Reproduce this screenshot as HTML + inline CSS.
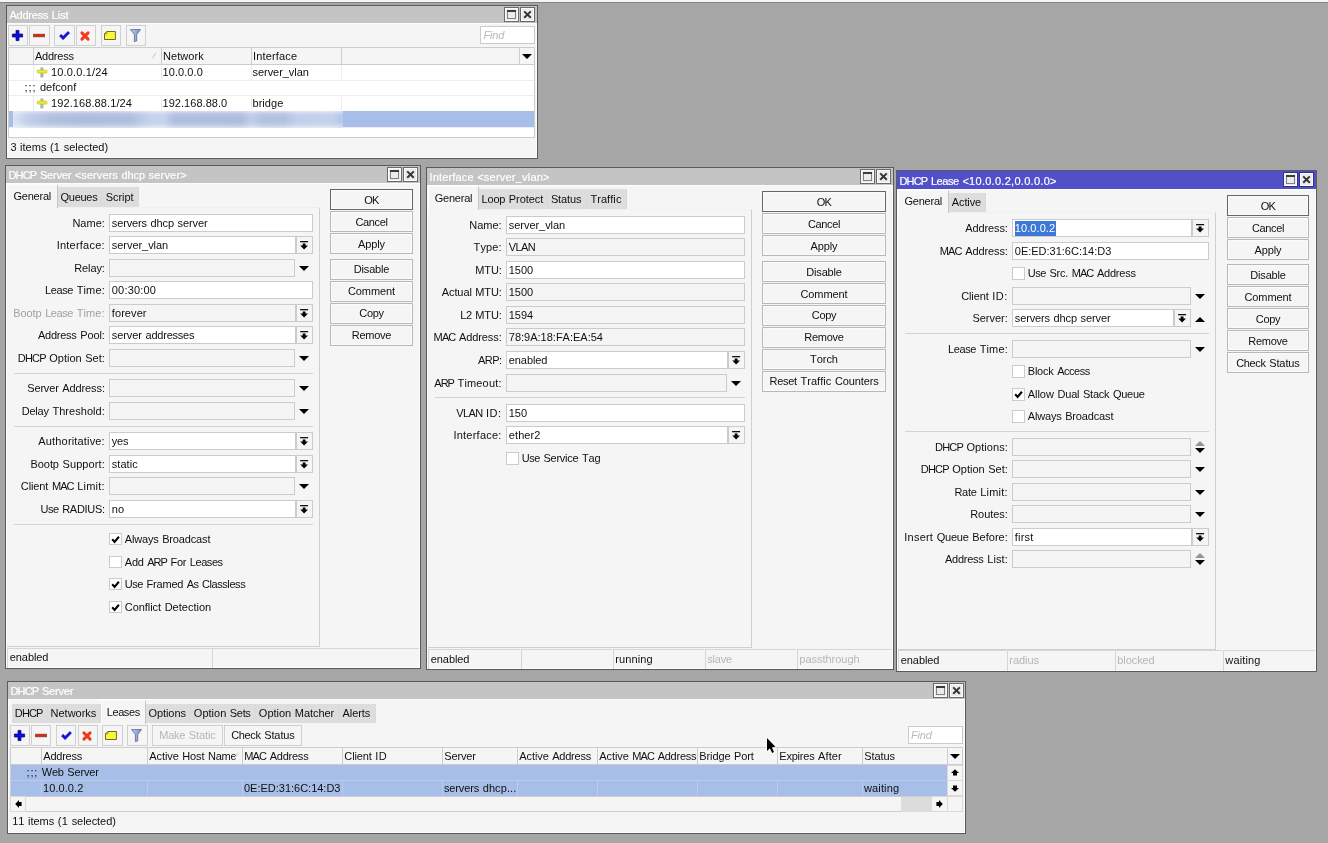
<!DOCTYPE html>
<html><head><meta charset="utf-8"><title>WinBox</title>
<style>
html,body{margin:0;padding:0;}
body{width:1328px;height:843px;overflow:hidden;background:#a6a6a6;font-family:"Liberation Sans",sans-serif;font-size:11.0px;color:#101010;}
#root{position:relative;width:1328px;height:843px;overflow:hidden;will-change:transform;}
#root div,#root svg{position:absolute;box-sizing:border-box;}
svg{overflow:visible;}
.t{white-space:pre;font-size:11.0px;line-height:14px;height:14px;font-kerning:none;-webkit-text-stroke:0px currentColor;}
.win{background:#f5f5f5;border:1px solid #5a5a5a;box-shadow:inset 0 0 0 1px #fdfdfd;}
.tt{color:#fff;-webkit-text-stroke:0.2px #fff;}
.w{color:#fff;}
.lg{color:#a2a2a2;}
.lg2{color:#b6b6b6;}
.find{color:#b9b9b9;font-style:italic;}
.tb{background:#ebebeb;border:1px solid #6a6a6a;box-shadow:inset 0 0 0 1px #fcfcfc;}
.tab-a{background:#f5f5f5;border:1px solid #e2e2e2;border-bottom:none;border-top-color:#fbfbfb;border-left-color:#fbfbfb;border-right-color:#c6c6c6;}
.tab-i{background:#dddddd;box-shadow:inset -1px 0 0 #d9d9d9;}
.panel{border:1px solid #cfcfcf;border-left:none;border-top-color:#f0f0f0;}
.fld{border:1px solid #cbcbcb;}
.cb{border:1px solid #cbcbcb;background:#fff;}
.btn{border:1px solid #b8b8b8;background:#f5f5f5;box-shadow:inset 0 0 0 1px #fbfbfb;}
.btn.def{border-color:#666;}
.tbtn{border:1px solid #d0d0d0;background:#f5f5f5;}
.st{border:1px solid #d6d6d6;border-right:none;border-bottom:none;}
.tbl{border:1px solid #cdcdcd;background:#fff;}
.th{background:#f5f5f5;}
.sb{background:#f5f5f5;border:1px solid #dadada;}
.blur{background:linear-gradient(180deg,rgba(255,255,255,.5) 0,rgba(255,255,255,.12) 3px,rgba(255,255,255,0) 6px,rgba(255,255,255,0) 11px,rgba(255,255,255,.2) 14px,rgba(255,255,255,.55) 17px),linear-gradient(90deg,#dbe4f5 0,#c3d0ea 14px,#b3c1e0 36px,#adbcdc 70px,#b0bfdf 118px,#c4d1ec 136px,#c6d3ed 150px,#b0bfdf 162px,#aebddd 228px,#c0cdea 238px,#b4c3e1 250px,#b2c1e0 270px,#c2cfeb 284px,#c4d1ec 318px,#b5c6ea 330px);filter:blur(.6px);}
</style></head>
<body>
<div id="root">
<div style="left:0px;top:0px;width:1328px;height:2px;background:#f5f5f5;"></div>
<div style="left:0px;top:2px;width:1328px;height:1px;background:#848484;"></div>
<div class="win" style="left:6px;top:5px;width:532px;height:154px;"></div>
<div style="left:7px;top:6px;width:530px;height:17px;background:#c4c4c4;"></div>
<div style="left:7px;top:23px;width:530px;height:1px;background:#fdfdfd;"></div>
<div class="t tt" style="left:9.5px;top:8.3px;"><span style="letter-spacing:-0.24px">Address</span><span style="letter-spacing:0.52px"> </span><span style="letter-spacing:-0.1px">List</span></div>
<div class="tb" style="left:504px;top:7px;width:15px;height:15px;border-color:#6a6a6a;"></div>
<svg style="left:507px;top:10px" width="9" height="9" viewBox="0 0 9 9"><rect x="0.5" y="0.5" width="8" height="8" fill="none" stroke="#828282"/><rect x="0" y="0" width="9" height="2" fill="#3c3c3c"/></svg>
<div class="tb" style="left:520px;top:7px;width:15px;height:15px;border-color:#6a6a6a;"></div>
<svg style="left:523px;top:10px" width="9" height="9" viewBox="0 0 9 9"><path d="M1.2 1.4 L7.8 7.8 M7.8 1.4 L1.2 7.8" stroke="#333" stroke-width="2" fill="none"/></svg>
<div class="tbtn" style="left:8px;top:25px;width:20px;height:21px;"></div>
<svg style="left:12px;top:30px" width="11" height="11" viewBox="0 0 11 11"><path d="M4 0.4 H7 V4 H10.6 V7 H7 V10.6 H4 V7 H0.4 V4 H4 Z" fill="#0d0aec" stroke="#050560" stroke-width="0.7"/></svg>
<div class="tbtn" style="left:29px;top:25px;width:21px;height:21px;"></div>
<svg style="left:33px;top:34px" width="12" height="3" viewBox="0 0 12 3"><rect x="0.3" y="0.1" width="11.4" height="2.8" fill="#e62400" stroke="#6e4a44" stroke-width="0.6"/></svg>
<div class="tbtn" style="left:54px;top:25px;width:21px;height:21px;"></div>
<svg style="left:58.5px;top:31px" width="11" height="9" viewBox="0 0 11 9"><path d="M0.4 5 L2.2 3.3 L4.1 5.3 L8.9 0.4 L10.6 2.1 L4.1 8.8 Z" fill="#1411ea" stroke="#0a0a8c" stroke-width="0.5"/></svg>
<div class="tbtn" style="left:76px;top:25px;width:20px;height:21px;"></div>
<svg style="left:80px;top:31px" width="10" height="10" viewBox="0 0 10 10"><path d="M1.9 1.9 L8.1 8.1 M8.1 1.9 L1.9 8.1" stroke="#f23a1a" stroke-width="3" stroke-linecap="round" fill="none"/></svg>
<div class="tbtn" style="left:101px;top:25px;width:20px;height:21px;"></div>
<svg style="left:104.2px;top:31px" width="12" height="9" viewBox="0 0 12 9"><path d="M2.9 0.5 H11.4 V8.5 H0.5 V2.9 Z" fill="#f8f83a" stroke="#5c5c14" stroke-width="0.9"/><path d="M2.9 0.5 V2.9 H0.5 Z" fill="#fcfca0" stroke="#5c5c14" stroke-width="0.6"/></svg>
<div class="tbtn" style="left:126px;top:25px;width:20px;height:21px;"></div>
<svg style="left:130px;top:29px" width="11" height="13" viewBox="0 0 11 13"><defs><linearGradient id="fg" x1="0" x2="1"><stop offset="0" stop-color="#c8d4f0"/><stop offset="1" stop-color="#7488c4"/></linearGradient></defs><path d="M0.5 0.6 H10.5 L6.7 5.4 V12 L4.4 12.6 V5.4 Z" fill="url(#fg)" stroke="#58648e" stroke-width="0.8"/></svg>
<div class="fld" style="left:480px;top:26px;width:55px;height:18px;background:#fff;"></div>
<div class="t find" style="left:483.5px;top:28px;"><span style="letter-spacing:-0.19px">Find</span></div>
<div class="tbl" style="left:8px;top:47px;width:527px;height:91px;"></div>
<div class="th" style="left:9px;top:48px;width:525px;height:16px;"></div>
<div style="left:9px;top:64px;width:525px;height:1px;background:#cdcdcd;"></div>
<div style="left:33px;top:48px;width:1px;height:16px;background:#cdcdcd;"></div>
<div style="left:161px;top:48px;width:1px;height:16px;background:#cdcdcd;"></div>
<div style="left:251px;top:48px;width:1px;height:16px;background:#cdcdcd;"></div>
<div style="left:341px;top:48px;width:1px;height:16px;background:#cdcdcd;"></div>
<div style="left:519px;top:48px;width:1px;height:16px;background:#cdcdcd;"></div>
<div class="t" style="left:35px;top:49px;"><span style="letter-spacing:-0.24px">Address</span></div>
<div class="t" style="left:163px;top:49px;"><span style="letter-spacing:0.07px">Network</span></div>
<div class="t" style="left:253px;top:49px;"><span style="letter-spacing:0.16px">Interface</span></div>
<svg style="left:151px;top:52px" width="7" height="7" viewBox="0 0 7 7"><path d="M1.2 6.5 L5 0.8" fill="none" stroke="#c4c4c4" stroke-width="1"/></svg>
<svg style="left:522px;top:54px" width="10" height="5" viewBox="0 0 10 5"><path d="M0 0 H10 L5.0 5 Z" fill="#000"/></svg>
<div style="left:9px;top:80px;width:525px;height:1px;background:#ededed;"></div>
<div style="left:9px;top:95px;width:525px;height:1px;background:#ededed;"></div>
<div style="left:9px;top:111px;width:525px;height:1px;background:#ededed;"></div>
<div style="left:9px;top:127px;width:525px;height:1px;background:#ededed;"></div>
<div style="left:33px;top:65px;width:1px;height:15px;background:#ededed;"></div>
<div style="left:161px;top:65px;width:1px;height:15px;background:#ededed;"></div>
<div style="left:251px;top:65px;width:1px;height:15px;background:#ededed;"></div>
<div style="left:341px;top:65px;width:1px;height:15px;background:#ededed;"></div>
<div style="left:33px;top:96px;width:1px;height:15px;background:#ededed;"></div>
<div style="left:161px;top:96px;width:1px;height:15px;background:#ededed;"></div>
<div style="left:251px;top:96px;width:1px;height:15px;background:#ededed;"></div>
<div style="left:341px;top:96px;width:1px;height:15px;background:#ededed;"></div>
<svg style="left:37px;top:67.3px" width="10" height="11" viewBox="0 0 10 11"><rect x="3.3" y="0.3" width="3.2" height="10.4" rx="1.4" fill="#a9b8b9"/><rect x="0.2" y="3.1" width="9.8" height="3" rx="0.9" fill="#f1ea2e" stroke="#c9c223" stroke-width="0.7"/></svg>
<div class="t" style="left:51px;top:65.2px;"><span style="letter-spacing:0.16px">10.0.0.1/24</span></div>
<div class="t" style="left:162.5px;top:65.2px;"><span style="letter-spacing:0.08px">10.0.0.0</span></div>
<div class="t" style="left:252.5px;top:65.2px;"><span style="letter-spacing:-0.05px">server_vlan</span></div>
<div class="t" style="left:24.6px;top:80.4px;"><span style="letter-spacing:0.86px">;;;</span><span style="letter-spacing:0.52px"> </span><span style="letter-spacing:0.03px">defconf</span></div>
<svg style="left:37px;top:98px" width="10" height="11" viewBox="0 0 10 11"><rect x="3.3" y="0.3" width="3.2" height="10.4" rx="1.4" fill="#a9b8b9"/><rect x="0.2" y="3.1" width="9.8" height="3" rx="0.9" fill="#f1ea2e" stroke="#c9c223" stroke-width="0.7"/></svg>
<div class="t" style="left:51px;top:96px;"><span style="letter-spacing:0.1px">192.168.88.1/24</span></div>
<div class="t" style="left:162.5px;top:96px;"><span style="letter-spacing:0.04px">192.168.88.0</span></div>
<div class="t" style="left:252.5px;top:96px;"><span style="letter-spacing:0.04px">bridge</span></div>
<div style="left:9px;top:111px;width:525px;height:16px;background:#a6bee8;"></div>
<div class="blur" style="left:13px;top:111px;width:330px;height:17px;"></div>
<div class="t" style="left:10.5px;top:140px;"><span style="letter-spacing:-0.1px">3</span><span style="letter-spacing:0.52px"> </span><span style="letter-spacing:0px">items</span><span style="letter-spacing:0.52px"> </span><span style="letter-spacing:0.22px">(1</span><span style="letter-spacing:0.52px"> </span><span style="letter-spacing:-0.04px">selected)</span></div>
<div class="win" style="left:5px;top:165px;width:416px;height:504px;"></div>
<div style="left:6px;top:166px;width:414px;height:17px;background:#c4c4c4;"></div>
<div style="left:6px;top:183px;width:414px;height:1px;background:#fdfdfd;"></div>
<div class="t tt" style="left:8.5px;top:168.1px;"><span style="letter-spacing:-0.84px">DHCP</span><span style="letter-spacing:0.52px"> </span><span style="letter-spacing:-0.18px">Server</span><span style="letter-spacing:0.52px"> </span><span style="letter-spacing:0.08px">&lt;servers</span><span style="letter-spacing:0.52px"> </span><span style="letter-spacing:-0.09px">dhcp</span><span style="letter-spacing:0.52px"> </span><span style="letter-spacing:0.18px">server&gt;</span></div>
<div class="tb" style="left:387px;top:167px;width:15px;height:15px;border-color:#6a6a6a;"></div>
<svg style="left:390px;top:170px" width="9" height="9" viewBox="0 0 9 9"><rect x="0.5" y="0.5" width="8" height="8" fill="none" stroke="#828282"/><rect x="0" y="0" width="9" height="2" fill="#3c3c3c"/></svg>
<div class="tb" style="left:403px;top:167px;width:15px;height:15px;border-color:#6a6a6a;"></div>
<svg style="left:406px;top:170px" width="9" height="9" viewBox="0 0 9 9"><path d="M1.2 1.4 L7.8 7.8 M7.8 1.4 L1.2 7.8" stroke="#333" stroke-width="2" fill="none"/></svg>
<div class="panel" style="left:7px;top:207px;width:313px;height:440px;"></div>
<div class="tab-a" style="left:7px;top:184px;width:51px;height:24px;"></div>
<div class="t" style="left:13.41px;top:188.8px;"><span style="letter-spacing:-0.21px">General</span></div>
<div class="tab-i" style="left:58px;top:187px;width:44px;height:20px;"></div>
<div class="t" style="left:60.5px;top:189.9px;"><span style="letter-spacing:-0.27px">Queues</span></div>
<div class="tab-i" style="left:102px;top:187px;width:37px;height:20px;"></div>
<div class="t" style="left:105.84px;top:189.9px;"><span style="letter-spacing:-0.07px">Script</span></div>
<div class="t" style="left:72.44px;top:216.2px;"><span style="letter-spacing:-0.01px">Name:</span></div>
<div class="fld" style="left:109px;top:214px;width:204px;height:18px;background:#fff;"></div>
<div class="t" style="left:111.8px;top:216.2px;"><span style="letter-spacing:-0.14px">servers</span><span style="letter-spacing:0.52px"> </span><span style="letter-spacing:-0.09px">dhcp</span><span style="letter-spacing:0.52px"> </span><span style="letter-spacing:-0.07px">server</span></div>
<div class="t" style="left:56.64px;top:238.2px;"><span style="letter-spacing:0.23px">Interface:</span></div>
<div class="fld" style="left:109px;top:236px;width:187px;height:18px;background:#fff;"></div>
<div class="fld" style="left:296px;top:236px;width:17px;height:18px;background:#f5f5f5;"></div>
<svg style="left:300px;top:241px" width="9" height="9" viewBox="0 0 9 9"><rect x="0.1" y="0" width="8" height="1.3" fill="#111"/><path d="M2.7 2.5 H5.5 V4.4 H8 L4.1 8.4 L0.2 4.4 H2.7 Z" fill="#000"/></svg>
<div class="t" style="left:111.8px;top:238.2px;"><span style="letter-spacing:-0.05px">server_vlan</span></div>
<div class="t" style="left:74.2px;top:261.2px;"><span style="letter-spacing:-0.1px">Relay:</span></div>
<div class="fld" style="left:109px;top:259px;width:186px;height:18px;background:#f5f5f5;"></div>
<svg style="left:299px;top:265.9px" width="10" height="5" viewBox="0 0 10 5"><path d="M0 0 H10 L5.0 5 Z" fill="#000"/></svg>
<div class="t" style="left:45.11px;top:283.2px;"><span style="letter-spacing:-0.4px">Lease</span><span style="letter-spacing:0.52px"> </span><span style="letter-spacing:0.13px">Time:</span></div>
<div class="fld" style="left:109px;top:281px;width:204px;height:18px;background:#fff;"></div>
<div class="t" style="left:111.8px;top:283.2px;"><span style="letter-spacing:0.18px">00:30:00</span></div>
<div class="t lg" style="left:13.16px;top:306.2px;"><span style="letter-spacing:-0.07px">Bootp</span><span style="letter-spacing:0.52px"> </span><span style="letter-spacing:-0.41px">Lease</span><span style="letter-spacing:0.52px"> </span><span style="letter-spacing:0.13px">Time:</span></div>
<div class="fld" style="left:109px;top:304px;width:187px;height:18px;background:#f5f5f5;"></div>
<div class="fld" style="left:296px;top:304px;width:17px;height:18px;background:#f5f5f5;"></div>
<svg style="left:300px;top:309px" width="9" height="9" viewBox="0 0 9 9"><rect x="0.1" y="0" width="8" height="1.3" fill="#111"/><path d="M2.7 2.5 H5.5 V4.4 H8 L4.1 8.4 L0.2 4.4 H2.7 Z" fill="#000"/></svg>
<div class="t" style="left:111.8px;top:306.2px;"><span style="letter-spacing:0.08px">forever</span></div>
<div class="t" style="left:37.96px;top:328.2px;"><span style="letter-spacing:-0.24px">Address</span><span style="letter-spacing:0.52px"> </span><span style="letter-spacing:-0.09px">Pool:</span></div>
<div class="fld" style="left:109px;top:326px;width:187px;height:18px;background:#fff;"></div>
<div class="fld" style="left:296px;top:326px;width:17px;height:18px;background:#f5f5f5;"></div>
<svg style="left:300px;top:331px" width="9" height="9" viewBox="0 0 9 9"><rect x="0.1" y="0" width="8" height="1.3" fill="#111"/><path d="M2.7 2.5 H5.5 V4.4 H8 L4.1 8.4 L0.2 4.4 H2.7 Z" fill="#000"/></svg>
<div class="t" style="left:111.8px;top:328.2px;"><span style="letter-spacing:-0.07px">server</span><span style="letter-spacing:0.52px"> </span><span style="letter-spacing:-0.23px">addresses</span></div>
<div class="t" style="left:17.83px;top:351.2px;"><span style="letter-spacing:-0.84px">DHCP</span><span style="letter-spacing:0.52px"> </span><span style="letter-spacing:0px">Option</span><span style="letter-spacing:0.52px"> </span><span style="letter-spacing:0.02px">Set:</span></div>
<div class="fld" style="left:109px;top:349px;width:186px;height:18px;background:#f5f5f5;"></div>
<svg style="left:299px;top:355.9px" width="10" height="5" viewBox="0 0 10 5"><path d="M0 0 H10 L5.0 5 Z" fill="#000"/></svg>
<div style="left:14px;top:373px;width:299px;height:1px;background:#d4d4d4;"></div>
<div class="t" style="left:27.27px;top:381.2px;"><span style="letter-spacing:-0.17px">Server</span><span style="letter-spacing:0.52px"> </span><span style="letter-spacing:-0.1px">Address:</span></div>
<div class="fld" style="left:109px;top:379px;width:186px;height:18px;background:#f5f5f5;"></div>
<svg style="left:299px;top:385.9px" width="10" height="5" viewBox="0 0 10 5"><path d="M0 0 H10 L5.0 5 Z" fill="#000"/></svg>
<div class="t" style="left:21.66px;top:404.2px;"><span style="letter-spacing:-0.18px">Delay</span><span style="letter-spacing:0.52px"> </span><span style="letter-spacing:0.03px">Threshold:</span></div>
<div class="fld" style="left:109px;top:402px;width:186px;height:18px;background:#f5f5f5;"></div>
<svg style="left:299px;top:408.9px" width="10" height="5" viewBox="0 0 10 5"><path d="M0 0 H10 L5.0 5 Z" fill="#000"/></svg>
<div style="left:14px;top:426px;width:299px;height:1px;background:#d4d4d4;"></div>
<div class="t" style="left:38.35px;top:434.2px;"><span style="letter-spacing:0.16px">Authoritative:</span></div>
<div class="fld" style="left:109px;top:432px;width:187px;height:18px;background:#fff;"></div>
<div class="fld" style="left:296px;top:432px;width:17px;height:18px;background:#f5f5f5;"></div>
<svg style="left:300px;top:437px" width="9" height="9" viewBox="0 0 9 9"><rect x="0.1" y="0" width="8" height="1.3" fill="#111"/><path d="M2.7 2.5 H5.5 V4.4 H8 L4.1 8.4 L0.2 4.4 H2.7 Z" fill="#000"/></svg>
<div class="t" style="left:111.8px;top:434.2px;"><span style="letter-spacing:-0.26px">yes</span></div>
<div class="t" style="left:30.52px;top:457.2px;"><span style="letter-spacing:-0.07px">Bootp</span><span style="letter-spacing:0.52px"> </span><span style="letter-spacing:0.09px">Support:</span></div>
<div class="fld" style="left:109px;top:455px;width:187px;height:18px;background:#fff;"></div>
<div class="fld" style="left:296px;top:455px;width:17px;height:18px;background:#f5f5f5;"></div>
<svg style="left:300px;top:460px" width="9" height="9" viewBox="0 0 9 9"><rect x="0.1" y="0" width="8" height="1.3" fill="#111"/><path d="M2.7 2.5 H5.5 V4.4 H8 L4.1 8.4 L0.2 4.4 H2.7 Z" fill="#000"/></svg>
<div class="t" style="left:111.8px;top:457.2px;"><span style="letter-spacing:0.04px">static</span></div>
<div class="t" style="left:20.84px;top:479.2px;"><span style="letter-spacing:-0.11px">Client</span><span style="letter-spacing:0.52px"> </span><span style="letter-spacing:-0.88px">MAC</span><span style="letter-spacing:0.52px"> </span><span style="letter-spacing:0.21px">Limit:</span></div>
<div class="fld" style="left:109px;top:477px;width:186px;height:18px;background:#f5f5f5;"></div>
<svg style="left:299px;top:483.9px" width="10" height="5" viewBox="0 0 10 5"><path d="M0 0 H10 L5.0 5 Z" fill="#000"/></svg>
<div class="t" style="left:40.58px;top:502.2px;"><span style="letter-spacing:-0.5px">Use</span><span style="letter-spacing:0.52px"> </span><span style="letter-spacing:-0.29px">RADIUS:</span></div>
<div class="fld" style="left:109px;top:500px;width:187px;height:18px;background:#fff;"></div>
<div class="fld" style="left:296px;top:500px;width:17px;height:18px;background:#f5f5f5;"></div>
<svg style="left:300px;top:505px" width="9" height="9" viewBox="0 0 9 9"><rect x="0.1" y="0" width="8" height="1.3" fill="#111"/><path d="M2.7 2.5 H5.5 V4.4 H8 L4.1 8.4 L0.2 4.4 H2.7 Z" fill="#000"/></svg>
<div class="t" style="left:111.8px;top:502.2px;"><span style="letter-spacing:-0.01px">no</span></div>
<div style="left:14px;top:524px;width:299px;height:1px;background:#d4d4d4;"></div>
<div class="cb" style="left:109px;top:533px;width:13px;height:12px;"></div>
<svg style="left:111px;top:535px" width="9" height="9" viewBox="0 0 9 9"><path d="M1.2 4.3 L3.6 6.9 L7.9 1.8" stroke="#000" stroke-width="2.1" fill="none"/></svg>
<div class="t" style="left:124.8px;top:532.4px;"><span style="letter-spacing:-0.18px">Always</span><span style="letter-spacing:0.52px"> </span><span style="letter-spacing:-0.15px">Broadcast</span></div>
<div class="cb" style="left:109px;top:556px;width:13px;height:12px;"></div>
<div class="t" style="left:124.8px;top:555.4px;"><span style="letter-spacing:-0.23px">Add</span><span style="letter-spacing:0.52px"> </span><span style="letter-spacing:-1.01px">ARP</span><span style="letter-spacing:0.52px"> </span><span style="letter-spacing:-0.26px">For</span><span style="letter-spacing:0.52px"> </span><span style="letter-spacing:-0.42px">Leases</span></div>
<div class="cb" style="left:109px;top:578px;width:13px;height:12px;"></div>
<svg style="left:111px;top:580px" width="9" height="9" viewBox="0 0 9 9"><path d="M1.2 4.3 L3.6 6.9 L7.9 1.8" stroke="#000" stroke-width="2.1" fill="none"/></svg>
<div class="t" style="left:124.8px;top:577.4px;"><span style="letter-spacing:-0.5px">Use</span><span style="letter-spacing:0.52px"> </span><span style="letter-spacing:-0.18px">Framed</span><span style="letter-spacing:0.52px"> </span><span style="letter-spacing:-0.66px">As</span><span style="letter-spacing:0.52px"> </span><span style="letter-spacing:-0.42px">Classless</span></div>
<div class="cb" style="left:109px;top:601px;width:13px;height:12px;"></div>
<svg style="left:111px;top:603px" width="9" height="9" viewBox="0 0 9 9"><path d="M1.2 4.3 L3.6 6.9 L7.9 1.8" stroke="#000" stroke-width="2.1" fill="none"/></svg>
<div class="t" style="left:124.8px;top:600.4px;"><span style="letter-spacing:-0.05px">Conflict</span><span style="letter-spacing:0.52px"> </span><span style="letter-spacing:0px">Detection</span></div>
<div class="btn def" style="left:330px;top:189px;width:83px;height:21px;"></div>
<div class="t" style="left:364.29px;top:193px;"><span style="letter-spacing:-0.74px">OK</span></div>
<div class="btn" style="left:330px;top:211px;width:83px;height:21px;"></div>
<div class="t" style="left:355.39px;top:215px;"><span style="letter-spacing:-0.34px">Cancel</span></div>
<div class="btn" style="left:330px;top:233px;width:83px;height:21px;"></div>
<div class="t" style="left:358px;top:237px;"><span style="letter-spacing:-0.1px">Apply</span></div>
<div class="btn" style="left:330px;top:259px;width:83px;height:21px;"></div>
<div class="t" style="left:353.8px;top:262px;"><span style="letter-spacing:-0.18px">Disable</span></div>
<div class="btn" style="left:330px;top:281px;width:83px;height:21px;"></div>
<div class="t" style="left:347.94px;top:284px;"><span style="letter-spacing:-0.08px">Comment</span></div>
<div class="btn" style="left:330px;top:303px;width:83px;height:21px;"></div>
<div class="t" style="left:359.31px;top:306px;"><span style="letter-spacing:-0.33px">Copy</span></div>
<div class="btn" style="left:330px;top:325px;width:83px;height:21px;"></div>
<div class="t" style="left:351.76px;top:328px;"><span style="letter-spacing:-0.25px">Remove</span></div>
<div class="st" style="left:7px;top:648px;width:205px;height:20px;"></div>
<div class="t" style="left:9.8px;top:650px;"><span style="letter-spacing:-0.09px">enabled</span></div>
<div class="st" style="left:212px;top:648px;width:207px;height:20px;"></div>
<div class="win" style="left:426px;top:167px;width:468px;height:503px;"></div>
<div style="left:427px;top:168px;width:466px;height:17px;background:#c4c4c4;"></div>
<div style="left:427px;top:185px;width:466px;height:1px;background:#fdfdfd;"></div>
<div class="t tt" style="left:429.5px;top:170px;"><span style="letter-spacing:0.15px">Interface</span><span style="letter-spacing:0.52px"> </span><span style="letter-spacing:0.21px">&lt;server_vlan&gt;</span></div>
<div class="tb" style="left:860px;top:169px;width:15px;height:15px;border-color:#6a6a6a;"></div>
<svg style="left:863px;top:172px" width="9" height="9" viewBox="0 0 9 9"><rect x="0.5" y="0.5" width="8" height="8" fill="none" stroke="#828282"/><rect x="0" y="0" width="9" height="2" fill="#3c3c3c"/></svg>
<div class="tb" style="left:876px;top:169px;width:15px;height:15px;border-color:#6a6a6a;"></div>
<svg style="left:879px;top:172px" width="9" height="9" viewBox="0 0 9 9"><path d="M1.2 1.4 L7.8 7.8 M7.8 1.4 L1.2 7.8" stroke="#333" stroke-width="2" fill="none"/></svg>
<div class="panel" style="left:428px;top:209px;width:324px;height:439px;"></div>
<div class="tab-a" style="left:428px;top:186px;width:51px;height:24px;"></div>
<div class="t" style="left:434.66px;top:190.8px;"><span style="letter-spacing:-0.21px">General</span></div>
<div class="tab-i" style="left:479px;top:189px;width:69px;height:20px;"></div>
<div class="t" style="left:481.56px;top:191.9px;"><span style="letter-spacing:-0.2px">Loop</span><span style="letter-spacing:0.52px"> </span><span style="letter-spacing:-0.05px">Protect</span></div>
<div class="tab-i" style="left:548px;top:189px;width:39px;height:20px;"></div>
<div class="t" style="left:550.89px;top:191.9px;"><span style="letter-spacing:-0.1px">Status</span></div>
<div class="tab-i" style="left:587px;top:189px;width:40px;height:20px;"></div>
<div class="t" style="left:590.42px;top:191.9px;"><span style="letter-spacing:0.07px">Traffic</span></div>
<div class="t" style="left:469.24px;top:218.2px;"><span style="letter-spacing:-0.01px">Name:</span></div>
<div class="fld" style="left:506px;top:216px;width:239px;height:18px;background:#fff;"></div>
<div class="t" style="left:508.8px;top:218.2px;"><span style="letter-spacing:-0.05px">server_vlan</span></div>
<div class="t" style="left:473.62px;top:240.2px;"><span style="letter-spacing:0.09px">Type:</span></div>
<div class="fld" style="left:506px;top:238px;width:239px;height:18px;background:#f5f5f5;"></div>
<div class="t" style="left:508.8px;top:240.2px;"><span style="letter-spacing:-0.62px">VLAN</span></div>
<div class="t" style="left:475.3px;top:263.2px;"><span style="letter-spacing:-0.14px">MTU:</span></div>
<div class="fld" style="left:506px;top:261px;width:239px;height:18px;background:#fff;"></div>
<div class="t" style="left:508.8px;top:263.2px;"><span style="letter-spacing:-0.05px">1500</span></div>
<div class="t" style="left:441.74px;top:285.2px;"><span style="letter-spacing:-0.09px">Actual</span><span style="letter-spacing:0.52px"> </span><span style="letter-spacing:-0.16px">MTU:</span></div>
<div class="fld" style="left:506px;top:283px;width:239px;height:18px;background:#f5f5f5;"></div>
<div class="t" style="left:508.8px;top:285.2px;"><span style="letter-spacing:-0.05px">1500</span></div>
<div class="t" style="left:460.22px;top:308.2px;"><span style="letter-spacing:-0.34px">L2</span><span style="letter-spacing:0.52px"> </span><span style="letter-spacing:-0.16px">MTU:</span></div>
<div class="fld" style="left:506px;top:306px;width:239px;height:18px;background:#f5f5f5;"></div>
<div class="t" style="left:508.8px;top:308.2px;"><span style="letter-spacing:-0.05px">1594</span></div>
<div class="t" style="left:433.6px;top:330.2px;"><span style="letter-spacing:-0.87px">MAC</span><span style="letter-spacing:0.52px"> </span><span style="letter-spacing:-0.1px">Address:</span></div>
<div class="fld" style="left:506px;top:328px;width:239px;height:18px;background:#f5f5f5;"></div>
<div class="t" style="left:508.8px;top:330.2px;"><span style="letter-spacing:0px">78:9A:18:FA:EA:54</span></div>
<div class="t" style="left:477.99px;top:353.2px;"><span style="letter-spacing:-0.52px">ARP:</span></div>
<div class="fld" style="left:506px;top:351px;width:222px;height:18px;background:#fff;"></div>
<div class="fld" style="left:728px;top:351px;width:17px;height:18px;background:#f5f5f5;"></div>
<svg style="left:732px;top:356px" width="9" height="9" viewBox="0 0 9 9"><rect x="0.1" y="0" width="8" height="1.3" fill="#111"/><path d="M2.7 2.5 H5.5 V4.4 H8 L4.1 8.4 L0.2 4.4 H2.7 Z" fill="#000"/></svg>
<div class="t" style="left:508.8px;top:353.2px;"><span style="letter-spacing:-0.09px">enabled</span></div>
<div class="t" style="left:434.33px;top:376.2px;"><span style="letter-spacing:-1px">ARP</span><span style="letter-spacing:0.52px"> </span><span style="letter-spacing:0.16px">Timeout:</span></div>
<div class="fld" style="left:506px;top:374px;width:221px;height:18px;background:#f5f5f5;"></div>
<svg style="left:731px;top:380.9px" width="10" height="5" viewBox="0 0 10 5"><path d="M0 0 H10 L5.0 5 Z" fill="#000"/></svg>
<div style="left:435px;top:397px;width:310px;height:1px;background:#d4d4d4;"></div>
<div class="t" style="left:456.24px;top:406.2px;"><span style="letter-spacing:-0.63px">VLAN</span><span style="letter-spacing:0.52px"> </span><span style="letter-spacing:0.5px">ID:</span></div>
<div class="fld" style="left:506px;top:404px;width:239px;height:18px;background:#fff;"></div>
<div class="t" style="left:508.8px;top:406.2px;"><span style="letter-spacing:-0.05px">150</span></div>
<div class="t" style="left:453.44px;top:428.2px;"><span style="letter-spacing:0.23px">Interface:</span></div>
<div class="fld" style="left:506px;top:426px;width:222px;height:18px;background:#fff;"></div>
<div class="fld" style="left:728px;top:426px;width:17px;height:18px;background:#f5f5f5;"></div>
<svg style="left:732px;top:431px" width="9" height="9" viewBox="0 0 9 9"><rect x="0.1" y="0" width="8" height="1.3" fill="#111"/><path d="M2.7 2.5 H5.5 V4.4 H8 L4.1 8.4 L0.2 4.4 H2.7 Z" fill="#000"/></svg>
<div class="t" style="left:508.8px;top:428.2px;"><span style="letter-spacing:0.08px">ether2</span></div>
<div class="cb" style="left:506px;top:452px;width:13px;height:13px;"></div>
<div class="t" style="left:521.8px;top:451.4px;"><span style="letter-spacing:-0.5px">Use</span><span style="letter-spacing:0.52px"> </span><span style="letter-spacing:-0.24px">Service</span><span style="letter-spacing:0.52px"> </span><span style="letter-spacing:-0.17px">Tag</span></div>
<div class="btn def" style="left:762px;top:191px;width:124px;height:21px;"></div>
<div class="t" style="left:816.79px;top:195px;"><span style="letter-spacing:-0.74px">OK</span></div>
<div class="btn" style="left:762px;top:213px;width:124px;height:21px;"></div>
<div class="t" style="left:807.89px;top:217px;"><span style="letter-spacing:-0.34px">Cancel</span></div>
<div class="btn" style="left:762px;top:235px;width:124px;height:21px;"></div>
<div class="t" style="left:810.5px;top:239px;"><span style="letter-spacing:-0.1px">Apply</span></div>
<div class="btn" style="left:762px;top:261px;width:124px;height:21px;"></div>
<div class="t" style="left:806.3px;top:265px;"><span style="letter-spacing:-0.18px">Disable</span></div>
<div class="btn" style="left:762px;top:283px;width:124px;height:21px;"></div>
<div class="t" style="left:800.44px;top:287px;"><span style="letter-spacing:-0.08px">Comment</span></div>
<div class="btn" style="left:762px;top:305px;width:124px;height:21px;"></div>
<div class="t" style="left:811.81px;top:308px;"><span style="letter-spacing:-0.33px">Copy</span></div>
<div class="btn" style="left:762px;top:327px;width:124px;height:21px;"></div>
<div class="t" style="left:804.26px;top:330px;"><span style="letter-spacing:-0.25px">Remove</span></div>
<div class="btn" style="left:762px;top:349px;width:124px;height:21px;"></div>
<div class="t" style="left:810.06px;top:352px;"><span style="letter-spacing:-0.05px">Torch</span></div>
<div class="btn" style="left:762px;top:371px;width:124px;height:21px;"></div>
<div class="t" style="left:769.55px;top:374px;"><span style="letter-spacing:-0.3px">Reset</span><span style="letter-spacing:0.52px"> </span><span style="letter-spacing:0.06px">Traffic</span><span style="letter-spacing:0.52px"> </span><span style="letter-spacing:-0.13px">Counters</span></div>
<div class="st" style="left:428px;top:649px;width:92px;height:20px;"></div>
<div class="t" style="left:430.8px;top:651.8px;"><span style="letter-spacing:-0.09px">enabled</span></div>
<div class="st" style="left:521px;top:649px;width:91px;height:20px;"></div>
<div class="st" style="left:613px;top:649px;width:91px;height:20px;"></div>
<div class="t" style="left:615.3px;top:651.8px;"><span style="letter-spacing:0.11px">running</span></div>
<div class="st" style="left:705px;top:649px;width:91px;height:20px;"></div>
<div class="t lg2" style="left:707.3px;top:651.8px;"><span style="letter-spacing:-0.19px">slave</span></div>
<div class="st" style="left:797px;top:649px;width:95px;height:20px;"></div>
<div class="t lg2" style="left:799.3px;top:651.8px;"><span style="letter-spacing:-0.02px">passthrough</span></div>
<div class="win" style="left:896px;top:170px;width:421px;height:502px;"></div>
<div style="left:897px;top:171px;width:419px;height:18px;background:#5250c8;"></div>
<div style="left:897px;top:189px;width:419px;height:1px;background:#fdfdfd;"></div>
<div class="t tt" style="left:899.5px;top:173.9px;"><span style="letter-spacing:-0.84px">DHCP</span><span style="letter-spacing:0.52px"> </span><span style="letter-spacing:-0.41px">Lease</span><span style="letter-spacing:0.52px"> </span><span style="letter-spacing:0.28px">&lt;10.0.0.2,0.0.0.0&gt;</span></div>
<div class="tb" style="left:1283px;top:172px;width:15px;height:15px;border-color:#2f2e8e;"></div>
<svg style="left:1286px;top:175px" width="9" height="9" viewBox="0 0 9 9"><rect x="0.5" y="0.5" width="8" height="8" fill="none" stroke="#828282"/><rect x="0" y="0" width="9" height="2" fill="#3c3c3c"/></svg>
<div class="tb" style="left:1299px;top:172px;width:15px;height:15px;border-color:#2f2e8e;"></div>
<svg style="left:1302px;top:175px" width="9" height="9" viewBox="0 0 9 9"><path d="M1.2 1.4 L7.8 7.8 M7.8 1.4 L1.2 7.8" stroke="#333" stroke-width="2" fill="none"/></svg>
<div class="panel" style="left:898px;top:212px;width:318px;height:438px;"></div>
<div class="tab-a" style="left:898px;top:190px;width:51px;height:23px;"></div>
<div class="t" style="left:904.41px;top:194.3px;"><span style="letter-spacing:-0.21px">General</span></div>
<div class="tab-i" style="left:949px;top:193px;width:37px;height:19px;"></div>
<div class="t" style="left:951.74px;top:195.4px;"><span style="letter-spacing:-0.09px">Active</span></div>
<div class="t" style="left:965.17px;top:221.2px;"><span style="letter-spacing:-0.1px">Address:</span></div>
<div class="fld" style="left:1012px;top:219px;width:180px;height:18px;background:#fff;"></div>
<div class="fld" style="left:1192px;top:219px;width:17px;height:18px;background:#f5f5f5;"></div>
<svg style="left:1196px;top:224px" width="9" height="9" viewBox="0 0 9 9"><rect x="0.1" y="0" width="8" height="1.3" fill="#111"/><path d="M2.7 2.5 H5.5 V4.4 H8 L4.1 8.4 L0.2 4.4 H2.7 Z" fill="#000"/></svg>
<div style="left:1015px;top:221px;width:41px;height:15px;background:#3b78d8;"></div>
<div class="t w" style="left:1014.8px;top:221.2px;"><span style="letter-spacing:0.08px">10.0.0.2</span></div>
<div class="t" style="left:939.8px;top:244.2px;"><span style="letter-spacing:-0.87px">MAC</span><span style="letter-spacing:0.52px"> </span><span style="letter-spacing:-0.1px">Address:</span></div>
<div class="fld" style="left:1012px;top:242px;width:197px;height:18px;background:#fff;"></div>
<div class="t" style="left:1014.8px;top:244.2px;"><span style="letter-spacing:-0.01px">0E:ED:31:6C:14:D3</span></div>
<div class="cb" style="left:1012px;top:267px;width:13px;height:13px;"></div>
<div class="t" style="left:1027.8px;top:266.4px;"><span style="letter-spacing:-0.5px">Use</span><span style="letter-spacing:0.52px"> </span><span style="letter-spacing:-0.24px">Src.</span><span style="letter-spacing:0.52px"> </span><span style="letter-spacing:-0.88px">MAC</span><span style="letter-spacing:0.52px"> </span><span style="letter-spacing:-0.24px">Address</span></div>
<div class="t" style="left:961.19px;top:289.2px;"><span style="letter-spacing:-0.11px">Client</span><span style="letter-spacing:0.52px"> </span><span style="letter-spacing:0.5px">ID:</span></div>
<div class="fld" style="left:1012px;top:287px;width:179px;height:18px;background:#f5f5f5;"></div>
<svg style="left:1195px;top:293.9px" width="10" height="5" viewBox="0 0 10 5"><path d="M0 0 H10 L5.0 5 Z" fill="#000"/></svg>
<div class="t" style="left:972.45px;top:311.2px;"><span style="letter-spacing:-0.02px">Server:</span></div>
<div class="fld" style="left:1012px;top:309px;width:162px;height:18px;background:#fff;"></div>
<div class="fld" style="left:1174px;top:309px;width:17px;height:18px;background:#f5f5f5;"></div>
<svg style="left:1178px;top:314px" width="9" height="9" viewBox="0 0 9 9"><rect x="0.1" y="0" width="8" height="1.3" fill="#111"/><path d="M2.7 2.5 H5.5 V4.4 H8 L4.1 8.4 L0.2 4.4 H2.7 Z" fill="#000"/></svg>
<svg style="left:1195.2px;top:316.5px" width="10" height="5" viewBox="0 0 10 5"><path d="M0 5 H10 L5.0 0 Z" fill="#000"/></svg>
<div class="t" style="left:1014.8px;top:311.2px;"><span style="letter-spacing:-0.14px">servers</span><span style="letter-spacing:0.52px"> </span><span style="letter-spacing:-0.09px">dhcp</span><span style="letter-spacing:0.52px"> </span><span style="letter-spacing:-0.07px">server</span></div>
<div style="left:905px;top:333px;width:304px;height:1px;background:#d4d4d4;"></div>
<div class="t" style="left:948.11px;top:342.2px;"><span style="letter-spacing:-0.4px">Lease</span><span style="letter-spacing:0.52px"> </span><span style="letter-spacing:0.13px">Time:</span></div>
<div class="fld" style="left:1012px;top:340px;width:179px;height:18px;background:#f5f5f5;"></div>
<svg style="left:1195px;top:346.9px" width="10" height="5" viewBox="0 0 10 5"><path d="M0 0 H10 L5.0 5 Z" fill="#000"/></svg>
<div class="cb" style="left:1012px;top:365px;width:13px;height:13px;"></div>
<div class="t" style="left:1027.8px;top:364.4px;"><span style="letter-spacing:-0.23px">Block</span><span style="letter-spacing:0.52px"> </span><span style="letter-spacing:-0.47px">Access</span></div>
<div class="cb" style="left:1012px;top:388px;width:13px;height:13px;"></div>
<svg style="left:1014px;top:390px" width="9" height="9" viewBox="0 0 9 9"><path d="M1.2 4.3 L3.6 6.9 L7.9 1.8" stroke="#000" stroke-width="2.1" fill="none"/></svg>
<div class="t" style="left:1027.8px;top:387.4px;"><span style="letter-spacing:-0.06px">Allow</span><span style="letter-spacing:0.52px"> </span><span style="letter-spacing:-0.15px">Dual</span><span style="letter-spacing:0.52px"> </span><span style="letter-spacing:-0.24px">Stack</span><span style="letter-spacing:0.52px"> </span><span style="letter-spacing:-0.23px">Queue</span></div>
<div class="cb" style="left:1012px;top:410px;width:13px;height:13px;"></div>
<div class="t" style="left:1027.8px;top:409.4px;"><span style="letter-spacing:-0.18px">Always</span><span style="letter-spacing:0.52px"> </span><span style="letter-spacing:-0.15px">Broadcast</span></div>
<div style="left:905px;top:431px;width:304px;height:1px;background:#d4d4d4;"></div>
<div class="t" style="left:935.1px;top:440.2px;"><span style="letter-spacing:-0.84px">DHCP</span><span style="letter-spacing:0.52px"> </span><span style="letter-spacing:0.05px">Options:</span></div>
<div class="fld" style="left:1012px;top:438px;width:179px;height:18px;background:#f5f5f5;"></div>
<svg style="left:1194.7px;top:441.3px" width="10" height="5" viewBox="0 0 10 5"><path d="M0 5 H10 L5.0 0 Z" fill="#8c9c8c"/></svg>
<svg style="left:1194.7px;top:448.1px" width="10" height="5" viewBox="0 0 10 5"><path d="M0 0 H10 L5.0 5 Z" fill="#000"/></svg>
<div class="t" style="left:920.83px;top:462.2px;"><span style="letter-spacing:-0.84px">DHCP</span><span style="letter-spacing:0.52px"> </span><span style="letter-spacing:0px">Option</span><span style="letter-spacing:0.52px"> </span><span style="letter-spacing:0.02px">Set:</span></div>
<div class="fld" style="left:1012px;top:460px;width:179px;height:18px;background:#f5f5f5;"></div>
<svg style="left:1195px;top:466.9px" width="10" height="5" viewBox="0 0 10 5"><path d="M0 0 H10 L5.0 5 Z" fill="#000"/></svg>
<div class="t" style="left:954.43px;top:485.2px;"><span style="letter-spacing:-0.25px">Rate</span><span style="letter-spacing:0.52px"> </span><span style="letter-spacing:0.21px">Limit:</span></div>
<div class="fld" style="left:1012px;top:483px;width:179px;height:18px;background:#f5f5f5;"></div>
<svg style="left:1195px;top:489.9px" width="10" height="5" viewBox="0 0 10 5"><path d="M0 0 H10 L5.0 5 Z" fill="#000"/></svg>
<div class="t" style="left:970.22px;top:507.2px;"><span style="letter-spacing:-0.05px">Routes:</span></div>
<div class="fld" style="left:1012px;top:505px;width:179px;height:18px;background:#f5f5f5;"></div>
<svg style="left:1195px;top:511.9px" width="10" height="5" viewBox="0 0 10 5"><path d="M0 0 H10 L5.0 5 Z" fill="#000"/></svg>
<div class="t" style="left:904.32px;top:530.2px;"><span style="letter-spacing:0.22px">Insert</span><span style="letter-spacing:0.52px"> </span><span style="letter-spacing:-0.24px">Queue</span><span style="letter-spacing:0.52px"> </span><span style="letter-spacing:0.03px">Before:</span></div>
<div class="fld" style="left:1012px;top:528px;width:180px;height:18px;background:#fff;"></div>
<div class="fld" style="left:1192px;top:528px;width:17px;height:18px;background:#f5f5f5;"></div>
<svg style="left:1196px;top:533px" width="9" height="9" viewBox="0 0 9 9"><rect x="0.1" y="0" width="8" height="1.3" fill="#111"/><path d="M2.7 2.5 H5.5 V4.4 H8 L4.1 8.4 L0.2 4.4 H2.7 Z" fill="#000"/></svg>
<div class="t" style="left:1014.8px;top:530.2px;"><span style="letter-spacing:0.2px">first</span></div>
<div class="t" style="left:944.93px;top:552.2px;"><span style="letter-spacing:-0.24px">Address</span><span style="letter-spacing:0.52px"> </span><span style="letter-spacing:0.09px">List:</span></div>
<div class="fld" style="left:1012px;top:550px;width:179px;height:18px;background:#f5f5f5;"></div>
<svg style="left:1194.7px;top:553.3px" width="10" height="5" viewBox="0 0 10 5"><path d="M0 5 H10 L5.0 0 Z" fill="#8c9c8c"/></svg>
<svg style="left:1194.7px;top:560.1px" width="10" height="5" viewBox="0 0 10 5"><path d="M0 0 H10 L5.0 5 Z" fill="#000"/></svg>
<div class="btn def" style="left:1227px;top:195px;width:82px;height:21px;"></div>
<div class="t" style="left:1260.79px;top:199px;"><span style="letter-spacing:-0.74px">OK</span></div>
<div class="btn" style="left:1227px;top:217px;width:82px;height:21px;"></div>
<div class="t" style="left:1251.89px;top:221px;"><span style="letter-spacing:-0.34px">Cancel</span></div>
<div class="btn" style="left:1227px;top:239px;width:82px;height:21px;"></div>
<div class="t" style="left:1254.5px;top:243px;"><span style="letter-spacing:-0.1px">Apply</span></div>
<div class="btn" style="left:1227px;top:264px;width:82px;height:21px;"></div>
<div class="t" style="left:1250.3px;top:268px;"><span style="letter-spacing:-0.18px">Disable</span></div>
<div class="btn" style="left:1227px;top:286px;width:82px;height:21px;"></div>
<div class="t" style="left:1244.44px;top:290px;"><span style="letter-spacing:-0.08px">Comment</span></div>
<div class="btn" style="left:1227px;top:308px;width:82px;height:21px;"></div>
<div class="t" style="left:1255.81px;top:312px;"><span style="letter-spacing:-0.33px">Copy</span></div>
<div class="btn" style="left:1227px;top:330px;width:82px;height:21px;"></div>
<div class="t" style="left:1248.26px;top:334px;"><span style="letter-spacing:-0.25px">Remove</span></div>
<div class="btn" style="left:1227px;top:352px;width:82px;height:21px;"></div>
<div class="t" style="left:1236.26px;top:356px;"><span style="letter-spacing:-0.37px">Check</span><span style="letter-spacing:0.52px"> </span><span style="letter-spacing:-0.1px">Status</span></div>
<div class="st" style="left:898px;top:650px;width:108px;height:21px;"></div>
<div class="t" style="left:900.8px;top:652.6px;"><span style="letter-spacing:-0.09px">enabled</span></div>
<div class="st" style="left:1007px;top:650px;width:107px;height:21px;"></div>
<div class="t lg2" style="left:1009.3px;top:652.6px;"><span style="letter-spacing:-0.05px">radius</span></div>
<div class="st" style="left:1115px;top:650px;width:107px;height:21px;"></div>
<div class="t lg2" style="left:1117.3px;top:652.6px;"><span style="letter-spacing:-0.08px">blocked</span></div>
<div class="st" style="left:1223px;top:650px;width:92px;height:21px;"></div>
<div class="t" style="left:1225.3px;top:652.6px;"><span style="letter-spacing:0.14px">waiting</span></div>
<div class="win" style="left:7px;top:681px;width:959px;height:153px;"></div>
<div style="left:8px;top:682px;width:957px;height:17px;background:#c4c4c4;"></div>
<div style="left:8px;top:699px;width:957px;height:1px;background:#fdfdfd;"></div>
<div class="t tt" style="left:10.5px;top:684.2px;"><span style="letter-spacing:-0.84px">DHCP</span><span style="letter-spacing:0.52px"> </span><span style="letter-spacing:-0.17px">Server</span></div>
<div class="tb" style="left:933px;top:683px;width:15px;height:15px;border-color:#6a6a6a;"></div>
<svg style="left:936px;top:686px" width="9" height="9" viewBox="0 0 9 9"><rect x="0.5" y="0.5" width="8" height="8" fill="none" stroke="#828282"/><rect x="0" y="0" width="9" height="2" fill="#3c3c3c"/></svg>
<div class="tb" style="left:949px;top:683px;width:15px;height:15px;border-color:#6a6a6a;"></div>
<svg style="left:952px;top:686px" width="9" height="9" viewBox="0 0 9 9"><path d="M1.2 1.4 L7.8 7.8 M7.8 1.4 L1.2 7.8" stroke="#333" stroke-width="2" fill="none"/></svg>
<div class="tab-i" style="left:12px;top:704px;width:36px;height:19px;"></div>
<div class="t" style="left:14.78px;top:706px;"><span style="letter-spacing:-0.83px">DHCP</span></div>
<div class="tab-i" style="left:48px;top:704px;width:53px;height:19px;"></div>
<div class="t" style="left:50.56px;top:706px;"><span style="letter-spacing:-0.01px">Networks</span></div>
<div class="tab-a" style="left:101px;top:700px;width:45px;height:24px;"></div>
<div class="t" style="left:106.75px;top:704.7px;"><span style="letter-spacing:-0.41px">Leases</span></div>
<div class="tab-i" style="left:146px;top:704px;width:45px;height:19px;"></div>
<div class="t" style="left:148.48px;top:706px;"><span style="letter-spacing:-0.07px">Options</span></div>
<div class="tab-i" style="left:191px;top:704px;width:65px;height:19px;"></div>
<div class="t" style="left:193.86px;top:706px;"><span style="letter-spacing:0px">Option</span><span style="letter-spacing:0.52px"> </span><span style="letter-spacing:-0.34px">Sets</span></div>
<div class="tab-i" style="left:256px;top:704px;width:83px;height:19px;"></div>
<div class="t" style="left:258.83px;top:706px;"><span style="letter-spacing:0px">Option</span><span style="letter-spacing:0.52px"> </span><span style="letter-spacing:-0.07px">Matcher</span></div>
<div class="tab-i" style="left:339px;top:704px;width:37px;height:19px;"></div>
<div class="t" style="left:342.59px;top:706px;"><span style="letter-spacing:-0.07px">Alerts</span></div>
<div class="tbtn" style="left:10px;top:725px;width:20px;height:21px;"></div>
<svg style="left:14px;top:730px" width="11" height="11" viewBox="0 0 11 11"><path d="M4 0.4 H7 V4 H10.6 V7 H7 V10.6 H4 V7 H0.4 V4 H4 Z" fill="#0d0aec" stroke="#050560" stroke-width="0.7"/></svg>
<div class="tbtn" style="left:31px;top:725px;width:20px;height:21px;"></div>
<svg style="left:35px;top:734px" width="12" height="3" viewBox="0 0 12 3"><rect x="0.3" y="0.1" width="11.4" height="2.8" fill="#e62400" stroke="#6e4a44" stroke-width="0.6"/></svg>
<div class="tbtn" style="left:56px;top:725px;width:20px;height:21px;"></div>
<svg style="left:60.5px;top:731px" width="11" height="9" viewBox="0 0 11 9"><path d="M0.4 5 L2.2 3.3 L4.1 5.3 L8.9 0.4 L10.6 2.1 L4.1 8.8 Z" fill="#1411ea" stroke="#0a0a8c" stroke-width="0.5"/></svg>
<div class="tbtn" style="left:78px;top:725px;width:20px;height:21px;"></div>
<svg style="left:82px;top:731px" width="10" height="10" viewBox="0 0 10 10"><path d="M1.9 1.9 L8.1 8.1 M8.1 1.9 L1.9 8.1" stroke="#f23a1a" stroke-width="3" stroke-linecap="round" fill="none"/></svg>
<div class="tbtn" style="left:102px;top:725px;width:21px;height:21px;"></div>
<svg style="left:105.2px;top:731px" width="12" height="9" viewBox="0 0 12 9"><path d="M2.9 0.5 H11.4 V8.5 H0.5 V2.9 Z" fill="#f8f83a" stroke="#5c5c14" stroke-width="0.9"/><path d="M2.9 0.5 V2.9 H0.5 Z" fill="#fcfca0" stroke="#5c5c14" stroke-width="0.6"/></svg>
<div class="tbtn" style="left:127px;top:725px;width:21px;height:21px;"></div>
<svg style="left:131px;top:729px" width="11" height="13" viewBox="0 0 11 13"><defs><linearGradient id="fg" x1="0" x2="1"><stop offset="0" stop-color="#c8d4f0"/><stop offset="1" stop-color="#7488c4"/></linearGradient></defs><path d="M0.5 0.6 H10.5 L6.7 5.4 V12 L4.4 12.6 V5.4 Z" fill="url(#fg)" stroke="#58648e" stroke-width="0.8"/></svg>
<div class="tbtn" style="left:152px;top:725px;width:71px;height:21px;"></div>
<div class="t lg2" style="left:159.31px;top:728.4px;"><span style="letter-spacing:-0.29px">Make</span><span style="letter-spacing:0.52px"> </span><span style="letter-spacing:-0.07px">Static</span></div>
<div class="tbtn" style="left:224px;top:725px;width:78px;height:21px;"></div>
<div class="t" style="left:231.26px;top:728.4px;"><span style="letter-spacing:-0.37px">Check</span><span style="letter-spacing:0.52px"> </span><span style="letter-spacing:-0.1px">Status</span></div>
<div class="fld" style="left:908px;top:726px;width:55px;height:18px;background:#fff;"></div>
<div class="t find" style="left:911px;top:728px;"><span style="letter-spacing:-0.19px">Find</span></div>
<div class="tbl" style="left:10px;top:747px;width:953px;height:65px;background:#f5f5f5;"></div>
<div style="left:11px;top:765px;width:936px;height:31px;background:#a6bee8;"></div>
<div style="left:11px;top:780px;width:936px;height:1px;background:#bacbec;"></div>
<div style="left:41px;top:748px;width:1px;height:17px;background:#cdcdcd;"></div>
<div style="left:147px;top:748px;width:1px;height:17px;background:#cdcdcd;"></div>
<div style="left:242px;top:748px;width:1px;height:17px;background:#cdcdcd;"></div>
<div style="left:342px;top:748px;width:1px;height:17px;background:#cdcdcd;"></div>
<div style="left:442px;top:748px;width:1px;height:17px;background:#cdcdcd;"></div>
<div style="left:517px;top:748px;width:1px;height:17px;background:#cdcdcd;"></div>
<div style="left:597px;top:748px;width:1px;height:17px;background:#cdcdcd;"></div>
<div style="left:697px;top:748px;width:1px;height:17px;background:#cdcdcd;"></div>
<div style="left:777px;top:748px;width:1px;height:17px;background:#cdcdcd;"></div>
<div style="left:862px;top:748px;width:1px;height:17px;background:#cdcdcd;"></div>
<div style="left:947px;top:748px;width:1px;height:17px;background:#cdcdcd;"></div>
<div style="left:41px;top:781px;width:1px;height:15px;background:#bacbec;"></div>
<div style="left:147px;top:781px;width:1px;height:15px;background:#bacbec;"></div>
<div style="left:242px;top:781px;width:1px;height:15px;background:#bacbec;"></div>
<div style="left:342px;top:781px;width:1px;height:15px;background:#bacbec;"></div>
<div style="left:442px;top:781px;width:1px;height:15px;background:#bacbec;"></div>
<div style="left:517px;top:781px;width:1px;height:15px;background:#bacbec;"></div>
<div style="left:597px;top:781px;width:1px;height:15px;background:#bacbec;"></div>
<div style="left:697px;top:781px;width:1px;height:15px;background:#bacbec;"></div>
<div style="left:777px;top:781px;width:1px;height:15px;background:#bacbec;"></div>
<div style="left:862px;top:781px;width:1px;height:15px;background:#bacbec;"></div>
<div style="left:11px;top:764px;width:951px;height:1px;background:#cdcdcd;"></div>
<div class="t" style="left:43.3px;top:749px;"><span style="letter-spacing:-0.24px">Address</span></div>
<div class="t" style="left:149.3px;top:749px;"><span style="letter-spacing:-0.1px">Active</span><span style="letter-spacing:0.52px"> </span><span style="letter-spacing:-0.12px">Host</span><span style="letter-spacing:0.52px"> </span><span style="letter-spacing:-0.24px">Name</span></div>
<div class="t" style="left:244.3px;top:749px;"><span style="letter-spacing:-0.87px">MAC</span><span style="letter-spacing:0.52px"> </span><span style="letter-spacing:-0.24px">Address</span></div>
<div class="t" style="left:344.3px;top:749px;"><span style="letter-spacing:-0.11px">Client</span><span style="letter-spacing:0.52px"> </span><span style="letter-spacing:0.31px">ID</span></div>
<div class="t" style="left:444.3px;top:749px;"><span style="letter-spacing:-0.16px">Server</span></div>
<div class="t" style="left:519.3px;top:749px;"><span style="letter-spacing:-0.1px">Active</span><span style="letter-spacing:0.52px"> </span><span style="letter-spacing:-0.24px">Address</span></div>
<div class="t" style="left:599.3px;top:749px;"><span style="letter-spacing:-0.1px">Active</span><span style="letter-spacing:0.52px"> </span><span style="letter-spacing:-0.88px">MAC</span><span style="letter-spacing:0.52px"> </span><span style="letter-spacing:-0.24px">Address</span></div>
<div class="t" style="left:699.3px;top:749px;"><span style="letter-spacing:-0.11px">Bridge</span><span style="letter-spacing:0.52px"> </span><span style="letter-spacing:-0.09px">Port</span></div>
<div class="t" style="left:779.3px;top:749px;"><span style="letter-spacing:-0.21px">Expires</span><span style="letter-spacing:0.52px"> </span><span style="letter-spacing:0.09px">After</span></div>
<div class="t" style="left:864.3px;top:749px;"><span style="letter-spacing:-0.1px">Status</span></div>
<svg style="left:232.5px;top:751.5px" width="7" height="7" viewBox="0 0 7 7"><path d="M1.2 6.5 L5 0.8" fill="none" stroke="#d8d8d8" stroke-width="1"/></svg>
<svg style="left:534.5px;top:751.5px" width="7" height="7" viewBox="0 0 7 7"><path d="M1.2 6.5 L5 0.8" fill="none" stroke="#dadada" stroke-width="1"/></svg>
<svg style="left:950px;top:754px" width="10" height="5" viewBox="0 0 10 5"><path d="M0 0 H10 L5.0 5 Z" fill="#000"/></svg>
<div class="t" style="left:26.5px;top:765.3px;"><span style="letter-spacing:0.86px">;;;</span><span style="letter-spacing:0.52px"> </span><span style="letter-spacing:-0.24px">Web</span><span style="letter-spacing:0.52px"> </span><span style="letter-spacing:-0.17px">Server</span></div>
<div class="t" style="left:43px;top:780.7px;"><span style="letter-spacing:0.08px">10.0.0.2</span></div>
<div class="t" style="left:244px;top:780.7px;"><span style="letter-spacing:-0.01px">0E:ED:31:6C:14:D3</span></div>
<div class="t" style="left:444px;top:780.7px;"><span style="letter-spacing:-0.14px">servers</span><span style="letter-spacing:0.52px"> </span><span style="letter-spacing:0.09px">dhcp...</span></div>
<div class="t" style="left:864px;top:780.7px;"><span style="letter-spacing:0.14px">waiting</span></div>
<div class="sb" style="left:947px;top:765px;width:16px;height:16px;"></div>
<div class="sb" style="left:947px;top:780px;width:16px;height:16px;"></div>
<svg style="left:951.4px;top:769px" width="8" height="7" viewBox="0 0 8 7"><path d="M4 0.2 L8 4 H6 V6.6 H2 V4 H0 Z" fill="#000"/></svg>
<svg style="left:951.4px;top:785px" width="8" height="7" viewBox="0 0 8 7"><path d="M4 6.8 L8 3 H6 V0.4 H2 V3 H0 Z" fill="#000"/></svg>
<div style="left:11px;top:796px;width:951px;height:1px;background:#cdcdcd;"></div>
<div class="sb" style="left:10px;top:796px;width:16px;height:16px;"></div>
<svg style="left:14.5px;top:800px" width="7" height="8" viewBox="0 0 7 8"><path d="M0.2 4 L4 0 V2 H6.6 V6 H4 V8 Z" fill="#000"/></svg>
<div style="left:901px;top:797px;width:31px;height:15px;background:#dcdcdc;"></div>
<div class="sb" style="left:931px;top:796px;width:17px;height:16px;"></div>
<svg style="left:935.8px;top:800px" width="7" height="8" viewBox="0 0 7 8"><path d="M6.8 4 L3 0 V2 H0.4 V6 H3 V8 Z" fill="#000"/></svg>
<div class="sb" style="left:947px;top:796px;width:16px;height:16px;"></div>
<div class="t" style="left:12.3px;top:814px;"><span style="letter-spacing:-0.08px">11</span><span style="letter-spacing:0.52px"> </span><span style="letter-spacing:0px">items</span><span style="letter-spacing:0.52px"> </span><span style="letter-spacing:0.22px">(1</span><span style="letter-spacing:0.52px"> </span><span style="letter-spacing:-0.04px">selected)</span></div>
<svg style="left:766px;top:736.6px" width="11" height="18" viewBox="0 0 11 18"><path d="M1 1 V14 L3.9 11.3 L6.1 16 L8 15.1 L5.9 10.4 L9.4 9.7 Z" fill="#000" stroke="#fff" stroke-width="1.2" stroke-linejoin="round" paint-order="stroke"/></svg>
</div>
</body></html>
